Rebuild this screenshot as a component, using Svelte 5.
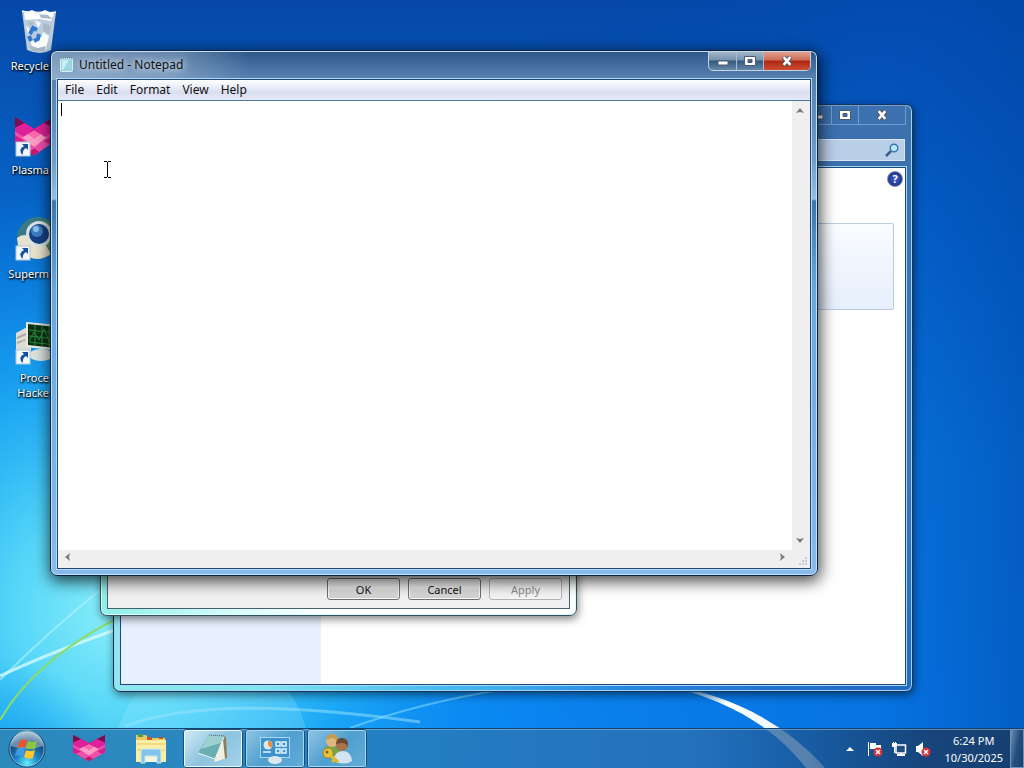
<script lang="ts">
	let note = $state('');
	let query = $state('');

	const menus = ['File', 'Edit', 'Format', 'View', 'Help'];

	const shortcuts = [
		{ icon: 'bin', lines: ['Recycle'] },
		{ icon: 'fox', lines: ['Plasma'] },
		{ icon: 'globe', lines: ['Superm'] },
		{ icon: 'monitor', lines: ['Proce', 'Hacke'] }
	];

	const tasks = [
		{ icon: 'fox', state: 'pinned', name: 'Plasma' },
		{ icon: 'folder', state: 'pinned', name: 'Explorer' },
		{ icon: 'notepad', state: 'active', name: 'Notepad' },
		{ icon: 'panel', state: 'open', name: 'Control Panel' },
		{ icon: 'users', state: 'open', name: 'Users' }
	];
</script>

{#snippet fox()}
	<path fill="#c2187f" d="M0 0 L16 10 L32 0 V21 L16 32 L0 21Z" />
	<path fill="#e0209a" d="M0 0 L16 10 L6 17 L0 12Z M32 0 L16 10 L26 17 L32 12Z" />
	<path fill="#7a0d4e" d="M0 0 L8 5 L0 9Z M32 0 L24 5 L32 9Z" />
	<path fill="#f04fae" d="M0 12 L16 22 L32 12 V21 L16 32 L0 21Z" />
	<path fill="#d81b8c" d="M0 15 L8 20 L3 23 L0 21Z M32 15 L24 20 L29 23 L32 21Z" />
	<path fill="#ff9cc4" d="M6 17 L11 14 L16 18 L21 14 L26 17 L16 25Z" />
	<path fill="#ff6aae" d="M11 14 L16 11 L21 14 L16 18Z" />
	<path fill="#c2186f" d="M12 29 L16 26 L20 29 L16 32Z" />
{/snippet}

{#snippet controls(kind: string)}
	<div class="controls {kind}">
		<button class="min" aria-label="Minimize">
			<svg width="14" height="12" viewBox="0 0 14 12"><rect x="2" y="6" width="10" height="4" fill="#fff" stroke="#4a5a72" /></svg>
		</button>
		<button class="max" aria-label="Maximize">
			<svg width="14" height="12" viewBox="0 0 14 12">
				<path fill="#fff" stroke="#4a5a72" fill-rule="evenodd" d="M1.500 1.500h11v9h-11z M5 4.500h4v3h-4z" />
			</svg>
		</button>
		<button class="close" aria-label="Close">
			<svg width="14" height="12" viewBox="0 0 14 12">
				<path fill="none" stroke="#53525e" stroke-width="4.500" d="M3.500 2 L10.500 10 M10.500 2 L3.500 10" />
				<path fill="none" stroke="#fff" stroke-width="2.600" d="M3.700 2.200 L10.300 9.800 M10.300 2.200 L3.700 9.800" />
			</svg>
		</button>
	</div>
{/snippet}

<main class="desktop">
	<svg class="wallpaper" viewBox="0 0 1024 768" preserveAspectRatio="none" aria-hidden="true">
		<defs>
			<linearGradient id="sky" x1="0" y1="0" x2="0" y2="1">
				<stop offset="0" stop-color="#0648a8" />
				<stop offset="0.300" stop-color="#0767ca" />
				<stop offset="0.600" stop-color="#0a82e6" />
				<stop offset="1" stop-color="#0a86f4" />
			</linearGradient>
			<radialGradient id="glow" gradientUnits="userSpaceOnUse" cx="120" cy="610" r="430">
				<stop offset="0" stop-color="#8ceffa" />
				<stop offset="0.250" stop-color="#55d6f8" />
				<stop offset="0.550" stop-color="#1fb0f6" stop-opacity="0.800" />
				<stop offset="1" stop-color="#0a86ee" stop-opacity="0" />
			</radialGradient>
			<radialGradient id="corner" gradientUnits="userSpaceOnUse" cx="0" cy="768" r="110">
				<stop offset="0" stop-color="#12a0f0" />
				<stop offset="1" stop-color="#12a0f0" stop-opacity="0" />
			</radialGradient>
			<linearGradient id="shade" x1="0" y1="0" x2="1" y2="0">
				<stop offset="0.500" stop-color="#0040a8" stop-opacity="0" />
				<stop offset="0.860" stop-color="#0050c0" stop-opacity="0.350" />
				<stop offset="1" stop-color="#0048ac" stop-opacity="0.650" />
			</linearGradient>
			<linearGradient id="beam" x1="0" y1="0" x2="1" y2="0">
				<stop offset="0" stop-color="#6cc4ff" stop-opacity="0.200" />
				<stop offset="0.400" stop-color="#fff" />
				<stop offset="1" stop-color="#d9edff" />
			</linearGradient>
		</defs>
		<rect width="1024" height="768" fill="url(#sky)" />
		<rect width="1024" height="768" fill="url(#glow)" />
		<rect width="1024" height="768" fill="url(#corner)" />
		<rect width="1024" height="768" fill="url(#shade)" />
		<path fill="#9beaff" opacity="0.250" d="M118 728 Q128 700 150 680 H280 Q298 700 306 728Z" />
		<path fill="none" stroke="#9be6fc" stroke-width="3" opacity="0.500" d="M125 726 C190 702 290 704 420 722" />
		<path fill="none" stroke="#b8f4fa" stroke-width="2" opacity="0.600" d="M0 680 C25 655 60 622 110 582" />
		<path fill="none" stroke="#e6ffff" stroke-width="3" opacity="0.700" d="M0 676 C30 662 70 645 130 625" />
		<path fill="none" stroke="#8ddb6a" stroke-width="2" d="M0 720 C20 685 60 645 130 612" />
		<path fill="none" stroke="#7fd8ff" stroke-width="2" opacity="0.600" d="M350 728 C400 710 450 698 500 690" />
		<path fill="url(#beam)" d="M660 684 C725 692 785 722 825 768 L806 768 C775 728 730 700 660 684Z" />
	</svg>

	<ul class="shortcuts">
		{#each shortcuts as item}
			<li>
				<svg width="48" height="48" viewBox="0 0 48 48" aria-hidden="true">
					{#if item.icon === 'bin'}
						<path fill="#cfdae2" opacity="0.900" d="M8 3 L42 4 L37 42 Q27 48 13 42Z" />
						<path fill="#fff" d="M10 5 l8 -3 l6 3 l7 -3 l9 4 l-3 7 l-12 -2 l-14 1z M17 33 l8 -4 l9 2 l-2 10 l-14 1z" />
						<path fill="#a9b9c6" d="M25 6 l9 1 l4 4 l-11 -1z M29 15 l8 3 l-2 8 l-6 -3z M15 37 l9 3 l8 -2 l-2 5 h-12z M14 13 l6 2 -5 3z" />
						<path fill="#f7fbfd" d="M29 24 l6 4 l-2 8 l-6 -5z M21 12 l6 3 l-3 5z M12 18 l4 3 l-2 6z" />
						<path fill="none" stroke="#2f78d2" stroke-width="4" d="M16 26 L19 20 L23 22 M25 26 L24 31 L20 33 M15 28 L17 33" />
						<path fill="none" stroke="#f5fafc" stroke-width="1.500" d="M8 3 Q25 8 42 4" />
					{:else if item.icon === 'fox'}
						<g transform="translate(1 5) scale(1.200)">{@render fox()}</g>
					{:else if item.icon === 'globe'}
						<circle cx="24" cy="22" r="21" fill="#3a7a84" />
						<path fill="#e8e2cc" d="M3 22 Q10 16 18 22 L38 28 L38 37 A21 21 0 0 1 4 30Z" />
						<path fill="#4f9454" d="M32 5 A20 20 0 0 1 44 24 A20 20 0 0 1 37 38 L31 28Z" />
						<circle cx="25" cy="18" r="13" fill="#d9e2e6" />
						<circle cx="25" cy="18" r="10" fill="#163f83" />
						<circle cx="23" cy="15" r="6" fill="#3f7fc6" />
						<circle cx="22" cy="13" r="3" fill="#8fc0ec" />
					{:else}
						<path fill="#dedcd2" d="M2 13 L17 5 V35 L2 38Z" />
						<path fill="#a7a79e" d="M3 17 L12 13 V15 L3 19Z M3 22 L12 19 V20 L3 24Z" />
						<path fill="#e8e6de" d="M12 2 L44 5 V31 L12 27Z" />
						<path fill="#0c3014" d="M14 4 L42 7 V28 L14 25Z" />
						<path fill="none" stroke="#2b8a3a" d="M15 10 L42 13 M15 16 L42 19 M15 22 L42 25 M21 5 V26 M28 6 V27 M35 6 V27 M15 21 L20 12 L25 20 L30 9 L36 23" />
						<ellipse cx="27" cy="35" rx="12" ry="6" fill="#dbe1df" />
					{/if}
					{#if item.icon !== 'bin'}
						<rect x="2" y="30" width="14" height="14" fill="#f2f7fa" stroke="#b7c8d6" />
						<path fill="#14509e" d="M8 32 h6 v6 l-2 -2 q-4 2 -3 7 q-6 -5 1 -9z" />
					{/if}
				</svg>
				<div class="caption">
					{#each item.lines as line}<span>{line}</span>{/each}
				</div>
			</li>
		{/each}
	</ul>

	<section class="window panel-window">
		{@render controls('plain')}
		<div class="search">
			<input type="text" aria-label="Search" bind:value={query} />
			<svg width="14" height="14" viewBox="0 0 14 14" aria-hidden="true">
				<path stroke="#3c5d88" stroke-width="2.500" d="M1 13 L6 8" />
				<circle cx="9" cy="5" r="3.800" fill="#bde6fb" stroke="#3b77ae" stroke-width="1.500" />
			</svg>
		</div>
		<div class="panel-client">
			<aside></aside>
			<div class="panel-body">
				<button class="help" aria-label="Help">?</button>
				<div class="group"></div>
			</div>
		</div>
	</section>

	<section class="window dialog">
		<div class="dialog-client">
			<button>OK</button>
			<button>Cancel</button>
			<button disabled>Apply</button>
		</div>
	</section>

	<section class="window notepad">
		<header>
			<svg width="15" height="16" viewBox="0 0 15 16" aria-hidden="true">
				<rect x="1.500" y="2.500" width="12" height="13" rx="1" fill="#9ad6e2" stroke="#d9eff4" />
				<path fill="#c8eef3" d="M3 4 h7 L4 14 H3z" />
				<path stroke="#4a7288" stroke-dasharray="1 1" d="M2 2 H13" />
			</svg>
			<h1>Untitled - Notepad</h1>
			{@render controls('aero')}
		</header>
		<div class="client">
			<nav>
				{#each menus as menu}<button>{menu}</button>{/each}
			</nav>
			<div class="editor">
				<textarea aria-label="Document" spellcheck="false" bind:value={note}></textarea>
				<span class="caret"></span>
				<div class="vscroll">
					<svg width="8" height="5" viewBox="0 0 8 5"><path fill="#7c7c7c" d="M0 5 L4 0 L8 5 L4 4Z" /></svg>
					<svg width="8" height="5" viewBox="0 0 8 5"><path fill="#7c7c7c" d="M0 0 L4 1 L8 0 L4 5Z" /></svg>
				</div>
				<div class="hscroll">
					<svg width="5" height="8" viewBox="0 0 5 8"><path fill="#7c7c7c" d="M5 0 L0 4 L5 8 L4 4Z" /></svg>
					<svg width="5" height="8" viewBox="0 0 5 8"><path fill="#7c7c7c" d="M0 0 L5 4 L0 8 L1 4Z" /></svg>
				</div>
				<div class="grip">
					<svg width="10" height="10" viewBox="0 0 10 10">
						<path fill="#c6cccf" d="M7 1h2v2h-2z M7 4h2v2h-2z M7 7h2v2h-2z M4 4h2v2h-2z M4 7h2v2h-2z M1 7h2v2h-2z" />
					</svg>
				</div>
			</div>
		</div>
	</section>

	<svg class="pointer" width="7" height="17" viewBox="0 0 7 17" aria-hidden="true">
		<path fill="none" stroke="#000" d="M0 0.500 H3 M4 0.500 H7 M3.500 1 V16 M0 16.500 H3 M4 16.500 H7" />
	</svg>

	<footer class="taskbar">
		<button class="start" aria-label="Start">
			<svg width="40" height="40" viewBox="0 0 40 40">
				<defs>
					<radialGradient id="orb" cx="0.500" cy="0.900" r="0.900">
						<stop offset="0" stop-color="#5ff0ff" />
						<stop offset="0.350" stop-color="#1c86c8" />
						<stop offset="0.700" stop-color="#174a7c" />
						<stop offset="1" stop-color="#8fb8d2" />
					</radialGradient>
				</defs>
				<circle cx="20" cy="20" r="18" fill="url(#orb)" stroke="#16466f" />
				<circle cx="20" cy="20" r="17" fill="none" stroke="#a7cfe4" opacity="0.700" />
				<path fill="#fff" opacity="0.350" d="M4 17 A16 16 0 0 1 36 17 Q20 23 4 17Z" />
				<path fill="#e8562a" d="M13 12 Q16 9 20 11 L18 19 Q14 17 10 19Z" />
				<path fill="#8cc63f" d="M21 12 Q25 14 30 12 L28 20 Q24 21 19 19Z" />
				<path fill="#3f9ce0" d="M10 20 Q14 18 18 20 L16 28 Q12 25 8 27Z" />
				<path fill="#fdc52e" d="M19 21 Q23 23 28 21 L26 29 Q22 31 17 28Z" />
			</svg>
		</button>
		<div class="tasks">
			{#each tasks as task}
				<button class={task.state} aria-label={task.name}>
					<svg width="32" height="32" viewBox="0 0 32 32">
						{#if task.icon === 'fox'}
							<g transform="translate(0 2) scale(1 0.820)">{@render fox()}</g>
						{:else if task.icon === 'folder'}
							<path fill="#e9c85c" d="M1 2 h10 l2 3 h17 v24 h-29z" />
							<path fill="#4c9c50" d="M3 1 h5 v3 h-5z" />
							<path fill="#c55335" d="M12 4 h5 v3 h-5z M24 4 h4 v2 h-4z" />
							<path fill="#fbefa4" d="M1 7 h30 v22 h-30z" />
							<path fill="none" stroke="#e3c766" d="M2 11 H30 M2 17 H6 M27 17 H30" />
							<path fill="#83c5ea" stroke="#c6e8f6" d="M6 18 q0 -2 2 -2 h16 q2 0 2 2 v12 h-4 v-7 h-12 v7 h-4z" />
							<path fill="#f6f6e6" d="M11 24 h10 v5 h-10z" />
						{:else if task.icon === 'notepad'}
							<path fill="#8b7d5c" d="M24 2 L29 4 L30 25 L25 27Z" />
							<path fill="#f1eee2" d="M26 6 L28 26 L17 29Z" />
							<path fill="#6aaeb2" d="M12 2 L27 3 L18 26 L1 20Z" />
							<path fill="#9fd0d0" d="M12 2 L27 3 L24 10 L4 16Z" />
							<path fill="none" stroke="#e8f7f8" d="M1 20 L18 26 L27 4" />
							<path fill="none" stroke="#456f78" stroke-dasharray="1 1" d="M12 2 L27 3" />
						{:else if task.icon === 'panel'}
							<rect x="1.500" y="4.500" width="29" height="20" fill="#3c92cc" stroke="#a6d9f6" />
							<circle cx="9" cy="12" r="4.500" fill="#dceaf0" />
							<path fill="#ed8b33" d="M9 12 V7.500 A4.500 4.500 0 0 1 12 15Z" />
							<path fill="none" stroke="#e3f2fc" stroke-width="1.500" d="M17 9h4v4h-4z M23 9h4v4h-4z M17 16h4v4h-4z M23 16h4v4h-4z M4 19h8" />
							<ellipse cx="16" cy="27" rx="7" ry="4" fill="#dce6ec" />
						{:else}
							<path fill="#77a650" d="M3 15 Q11 8 19 15 L18 24 H3Z" />
							<circle cx="11" cy="8" r="6" fill="#e0b780" />
							<path fill="#c99b52" d="M5 7 Q6 0 12 1 Q18 2 17 8 L12 5Z" />
							<path fill="#d3e3f2" d="M13 28 Q13 18 22 18 Q30 18 31 28 Q24 33 13 28Z" />
							<circle cx="21" cy="12" r="6" fill="#a8744a" />
							<path fill="#6b4a34" d="M15 11 Q15 4 22 5 Q28 6 27 14 Q25 8 15 11Z" />
							<circle cx="7" cy="20" r="5" fill="#e8c43a" stroke="#a88822" />
							<circle cx="6" cy="19" r="1.500" fill="#7c6420" />
							<path fill="none" stroke="#e0ba33" stroke-width="3" d="M10 23 L17 29 M13 27 L11 29" />
						{/if}
					</svg>
				</button>
			{/each}
		</div>
		<div class="tray">
			<button aria-label="Show hidden icons">
				<svg width="8" height="16" viewBox="0 0 8 16"><path fill="#fff" d="M0 10 L4 6 L8 10Z" /></svg>
			</button>
			<button aria-label="Action Center">
				<svg width="16" height="16" viewBox="0 0 16 16">
					<path fill="none" stroke="#fff" d="M1.500 1 V15" />
					<path fill="#fff" d="M3 2 h6 v2 h5 v6 h-6 v-2 h-5z" />
					<circle cx="11" cy="11" r="4.500" fill="#d8303a" />
					<path stroke="#fff" stroke-width="1.500" d="M9 9 L13 13 M13 9 L9 13" />
				</svg>
			</button>
			<button aria-label="Network">
				<svg width="16" height="16" viewBox="0 0 16 16">
					<rect x="5" y="4" width="9.500" height="8" fill="#215080" stroke="#fff" stroke-width="1.500" />
					<path fill="#fff" d="M1 2 h1 v-1 h1 v1 h1 v-1 h1 v1 h1 v4 h-2 v6 h-1 v-6 h-2z M9 12 h2 v1 h3 v2 h-8 v-2 h3z" />
				</svg>
			</button>
			<button aria-label="Volume">
				<svg width="16" height="16" viewBox="0 0 16 16">
					<path fill="#fff" d="M1 5 h2 L8 1 V15 L3 11 H1Z" />
					<circle cx="11" cy="11" r="4.500" fill="#d8303a" />
					<path stroke="#fff" stroke-width="1.500" d="M9 9 L13 13 M13 9 L9 13" />
				</svg>
			</button>
		</div>
		<div class="clock">
			<span>6:24 PM</span>
			<span>10/30/2025</span>
		</div>
		<button class="show-desktop" aria-label="Show desktop"></button>
	</footer>
</main>

<style>
	:global(body) {
		margin: 0;
		font-family: "Noto Sans", "Open Sans", sans-serif;
		font-size: 12px;
		color: #111;
	}

	button {
		padding: 0;
		border: 0;
		background: none;
		font: inherit;
		color: inherit;
	}

	svg {
		display: block;
	}

	.desktop {
		position: relative;
		display: flex;
		flex-direction: column;
		justify-content: space-between;
		min-height: 100vh;
		overflow: hidden;
		background: #0a6cd0;
	}

	.wallpaper {
		position: absolute;
		inset: 0;
		width: 100%;
		height: 100%;
	}

	.shortcuts {
		position: relative;
		display: grid;
		grid-auto-rows: 96px;
		gap: 8px;
		width: 76px;
		margin: 0;
		padding: 8px 0 0;
		list-style: none;
	}

	.shortcuts svg {
		margin-left: 14px;
	}

	.caption {
		display: flex;
		flex-direction: column;
		align-items: flex-end;
		width: 49px;
		padding-top: 2px;
		font-size: 11px;
		line-height: 15px;
		color: #fff;
		text-shadow: 0 1px 2px #000, 1px 1px 2px #000;
	}

	.window {
		position: absolute;
		display: flex;
		flex-direction: column;
		box-sizing: border-box;
		border: 1px solid #17375a;
		border-radius: 7px;
	}

	.controls {
		display: flex;
		height: 20px;
		box-sizing: border-box;
	}

	.controls button {
		display: flex;
		align-items: center;
		justify-content: center;
	}

	.controls .min {
		width: 27px;
	}

	.controls .max {
		width: 27px;
	}

	.controls .close {
		width: 47px;
	}

	.controls button + button {
		border-left: 1px solid #a3bdd6;
	}

	.aero {
		border: 1px solid #c3d3e2;
		border-radius: 0 0 5px 5px;
		overflow: hidden;
		background: linear-gradient(#a3b6c9, #7691ad 45%, #34577f 50%, #6689a9);
	}

	.aero .close {
		background: linear-gradient(#e2a08f, #cf6c57 45%, #ac2610 50%, #cf4d33);
	}

	.plain {
		align-self: flex-end;
		border: 1px solid #6f9fd2;
	}

	.plain button + button {
		border-color: #6f9fd2;
	}

	.panel-window {
		left: 113px;
		top: 104px;
		width: 800px;
		height: 588px;
		padding: 0 6px 6px;
		background: linear-gradient(to right, #8deaea, #7fe5f2 18%, #46b8ef 42%, #2e90e6 65%, #3a75b8);
		box-shadow: inset 0 0 0 1px #9fd2f4, 1px 3px 9px rgba(0, 0, 0, 0.5);
	}

	.panel-window::before {
		content: '';
		position: absolute;
		inset: 1px;
		border-radius: 6px;
		background: linear-gradient(#3c70ae, #3c76b8 60%, rgba(20, 100, 205, 0.6));
		mask-image: linear-gradient(to right, transparent 50%, #000 90%);
	}

	.panel-window > * {
		position: relative;
	}

	.search {
		display: flex;
		align-items: center;
		align-self: flex-end;
		width: 240px;
		height: 22px;
		margin: 14px 1px 6px 0;
		padding-right: 5px;
		box-sizing: border-box;
		border: 1px solid #d7e6f5;
		background: #b9cfe8;
	}

	.search input {
		flex: 1;
		min-width: 0;
		border: 0;
		background: none;
		font: inherit;
	}

	.panel-client {
		display: flex;
		flex: 1;
		border: 1px solid #1b4a7c;
		outline: 1px solid #a5d8f5;
		background: #fff;
	}

	aside {
		width: 200px;
		background: #e6f0fe;
	}

	.panel-body {
		display: flex;
		flex: 1;
		flex-direction: column;
		padding: 3px 2px 0 11px;
	}

	.help {
		align-self: flex-end;
		width: 16px;
		height: 16px;
		box-sizing: border-box;
		border: 1px solid #8388a8;
		border-radius: 50%;
		background: radial-gradient(#3d62c4, #15227c);
		font-size: 11px;
		font-weight: bold;
		line-height: 14px;
		color: #fff;
	}

	.group {
		height: 85px;
		margin: 36px 9px 0 0;
		border: 1px solid #bccbe3;
		border-radius: 2px;
		background: linear-gradient(#fafcff, #e6effd);
	}

	.dialog {
		left: 100px;
		top: 300px;
		width: 477px;
		height: 316px;
		padding: 6px;
		border-color: #34505f;
		background: linear-gradient(to right, #8ceee8, #cffbfb 25%, #fff 48%);
		box-shadow: inset 0 0 0 1px #d9ffff, 1px 3px 9px rgba(0, 0, 0, 0.5);
	}

	.dialog-client {
		display: flex;
		flex: 1;
		align-items: flex-end;
		justify-content: flex-end;
		gap: 8px;
		padding: 0 7px 8px;
		border: 1px solid #49606b;
		background: #f0f0f0;
	}

	.dialog button {
		width: 73px;
		height: 22px;
		border: 1px solid #707070;
		border-radius: 3px;
		background: linear-gradient(#f2f2f2, #e9e9e9 48%, #dcdcdc 52%, #d0d0d0);
		box-shadow: inset 0 0 0 1px #f8f8f8;
		font-size: 11px;
	}

	.dialog button:disabled {
		border-color: #b3b3b3;
		background: #f4f4f4;
		color: #8a8a8a;
	}

	.notepad {
		left: 50px;
		top: 50px;
		width: 768px;
		height: 526px;
		padding: 0 6px 6px;
		border-color: #0d2440;
		background:
			linear-gradient(to right, rgba(200, 216, 230, 0.5), rgba(170, 190, 212, 0.45) 16%, rgba(80, 110, 150, 0) 26%) 0 0 / 100% 29px no-repeat,
			linear-gradient(rgba(40, 85, 135, 0) 0, rgba(165, 195, 225, 0.5) 110px, rgba(190, 220, 245, 0.7) 148px, rgba(60, 130, 190, 0) 150px),
			linear-gradient(#2d5688, #4c78aa 28px, #3c76ad 150px, #6ba7de 240px, #88b9ea);
		box-shadow: inset 0 0 0 1px #c0e0f8, 1px 4px 16px 1px rgba(0, 0, 0, 0.75);
	}

	header {
		display: flex;
		align-items: flex-start;
		height: 28px;
	}

	header > svg {
		margin: 5px 5px 0 2px;
	}

	h1 {
		flex: 1;
		margin: 5px 0 0;
		font-size: 12px;
		font-weight: normal;
		line-height: 18px;
		text-shadow: 0 0 6px #dfe9f3, 0 0 8px #c9d8e6;
	}

	.client {
		display: flex;
		flex: 1;
		flex-direction: column;
		border: 1px solid #1c4a78;
		outline: 1px solid #b5d8f5;
		background: #fff;
	}

	nav {
		display: flex;
		height: 20px;
		padding-left: 1px;
		border-bottom: 1px solid #4c7596;
		background: linear-gradient(#fff, #e8ebf6 40%, #d9def0 60%, #e6eaf6);
	}

	nav button {
		padding: 0 6px;
		line-height: 20px;
	}

	.editor {
		position: relative;
		display: grid;
		grid-template: 1fr 18px / 1fr 18px;
		flex: 1;
	}

	textarea {
		padding: 2px 4px;
		border: 0;
		outline: 0;
		resize: none;
		font: 13px "Liberation Mono", monospace;
	}

	.caret {
		position: absolute;
		left: 3px;
		top: 2px;
		width: 1px;
		height: 13px;
		background: #000;
	}

	.vscroll,
	.hscroll,
	.grip {
		display: flex;
		align-items: center;
		justify-content: space-between;
		background: #efefef;
	}

	.vscroll {
		flex-direction: column;
		padding: 7px 2px 7px 0;
	}

	.hscroll {
		padding: 0 7px 4px;
	}

	.grip {
		align-items: flex-end;
		justify-content: flex-end;
		padding: 0 2px 2px 0;
	}

	.pointer {
		position: absolute;
		left: 104px;
		top: 161px;
	}

	.taskbar {
		position: relative;
		display: flex;
		height: 39px;
		border-top: 1px solid #174270;
		background: linear-gradient(to right, rgba(44, 135, 184, 0.94), rgba(38, 126, 190, 0.92) 35%, rgba(42, 110, 178, 0.82) 68%, rgba(30, 82, 138, 0.7) 79%, rgba(24, 66, 116, 0.92) 90%, #173f70);
		box-shadow: inset 0 1px 0 rgba(150, 205, 240, 0.5);
	}

	.start {
		width: 59px;
		padding-left: 7px;
	}

	.tasks {
		display: flex;
		flex: 1;
		gap: 2px;
	}

	.tasks button {
		display: flex;
		align-items: center;
		justify-content: center;
		width: 60px;
		box-sizing: border-box;
	}

	.tasks .open,
	.tasks .active {
		border: 1px solid #b2dcf2;
		border-radius: 3px;
		outline: 1px solid #174f7c;
		outline-offset: -1px;
		background: linear-gradient(135deg, #8fc5e4, #4f9fcf 50%, #62acd8);
		box-shadow: inset 0 0 0 1px #a6d6f0;
	}

	.tasks .active {
		background: linear-gradient(135deg, #d4ecf6, #8cc3de 50%, #a5d3ea);
		box-shadow: inset 0 0 0 1px #eefaff;
	}

	.tray {
		display: flex;
		align-items: center;
		gap: 8px;
		padding-right: 13px;
	}

	.tray button:first-child {
		margin-right: 5px;
	}

	.clock {
		display: flex;
		flex-direction: column;
		align-items: center;
		justify-content: center;
		padding-right: 7px;
		font-size: 11px;
		line-height: 17px;
		color: #fff;
	}

	.show-desktop {
		width: 14px;
		border: 1px solid #6f94b8;
		background: linear-gradient(100deg, #708fb0, #234f7f 50%, #18406e);
	}
</style>
